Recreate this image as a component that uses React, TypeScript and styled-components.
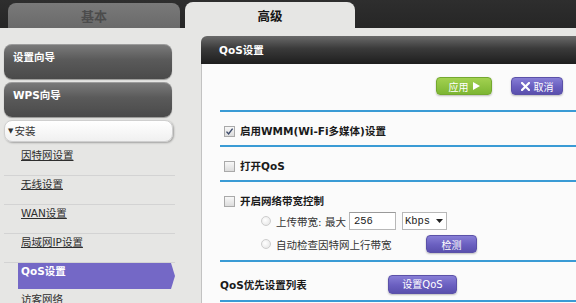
import React from "react";
import styled, { createGlobalStyle, css } from "styled-components";

const GlobalStyle = createGlobalStyle`
  html, body { margin: 0; padding: 0; background: #2a2a2a; }
  body {
    width: 576px; height: 303px; overflow: hidden;
    font-family: "DejaVu Sans", "Noto Sans CJK SC", sans-serif;
  }
`;

const Page = styled.div`
  width: 576px;
  height: 303px;
  overflow: hidden;
  display: flex;
  flex-direction: column;
  background: #2a2a2a;
  font-size: 10.5px;
  font-family: "DejaVu Sans", "Noto Sans CJK SC", sans-serif;
`;

const TabBar = styled.div`
  height: 28px;
  flex: none;
  display: flex;
  align-items: flex-end;
  gap: 5px;
  padding-left: 8px;
  box-sizing: border-box;
  background: linear-gradient(#2e2e2e, #262626);
`;

const Tab = styled.div<{ $active?: boolean }>`
  box-sizing: border-box;
  display: flex;
  align-items: center;
  justify-content: center;
  border-radius: 8px 8px 0 0;
  font-weight: bold;
  ${(p) =>
    p.$active
      ? css`
          width: 170px;
          height: 26px;
          background: #e6e6e4;
          color: #151515;
          font-size: 12.5px;
        `
      : css`
          width: 172px;
          height: 25px;
          background: linear-gradient(#797979, #6a6a6a);
          color: #4c4c4c;
          font-size: 13px;
        `}
`;

const Main = styled.div`
  flex: 1;
  display: flex;
  background: #e6e6e4;
  min-height: 0;
`;

const Sidebar = styled.div`
  width: 201px;
  flex: none;
  box-sizing: border-box;
  padding: 16px 0 0 4px;
  display: flex;
  flex-direction: column;
  & > * { flex: none; }
`;

const NavButton = styled.div`
  width: 168px;
  height: 35px;
  margin-bottom: 3px;
  box-sizing: border-box;
  padding: 5px 0 0 9px;
  line-height: 16px;
  border-radius: 8px;
  color: #fff;
  font-weight: bold;
  background: linear-gradient(#7c7c7c, #5a5a5a 45%, #4a4a4a);
  box-shadow: 0 1px 1px rgba(0, 0, 0, 0.35), inset 0 1px 0 rgba(255, 255, 255, 0.25);
`;

const SectionHeader = styled.div`
  width: 169px;
  height: 22px;
  box-sizing: border-box;
  border: 1px solid #cfcfcf;
  border-radius: 8px;
  background: linear-gradient(#ffffff, #f0f0f0);
  box-shadow: 1px 1px 2px rgba(0, 0, 0, 0.3);
  padding-left: 3px;
  line-height: 20px;
  color: #333;
  display: flex;
  align-items: center;
  gap: 1px;
`;

const Caret = styled.span`
  font-size: 7px;
  color: #333;
`;

const ItemList = styled.div`
  margin-top: 5px;
  width: 171px;
  display: flex;
  flex-direction: column;
  & > * { flex: none; }
`;

const Item = styled.div<{ $selected?: boolean }>`
  box-sizing: border-box;
  line-height: 16px;
  ${(p) =>
    p.$selected
      ? css`
          height: 26px;
          margin: 0 0 2px 14px;
          padding-left: 3px;
          background: #7468c6;
          color: #fff;
          font-weight: bold;
          clip-path: polygon(0 0, calc(100% - 4px) 0, 100% 50%, calc(100% - 4px) 100%, 0 100%);
        `
      : css`
          height: 29px;
          padding-left: 17px;
          color: #2e2e2e;
          text-decoration: underline;
          border-bottom: 1px solid #d3d3d3;
        `}
`;

const Panel = styled.div`
  flex: 1;
  min-width: 0;
  margin-top: 8px;
  display: flex;
  flex-direction: column;
  border-radius: 6px 0 0 0;
  overflow: hidden;
`;

const PanelHeader = styled.div`
  height: 28px;
  flex: none;
  box-sizing: border-box;
  padding-left: 18px;
  line-height: 29px;
  color: #fff;
  font-weight: bold;
  background: linear-gradient(#6a6a6a, #3a3a3a 45%, #1e1e1e);
`;

const PanelBody = styled.div`
  flex: 1;
  background: #fbfbfb;
  border-left: 1px solid #c2c2c2;
  padding-left: 18px;
  display: flex;
  flex-direction: column;
  & > * { flex: none; }
`;

const ButtonRow = styled.div`
  display: flex;
  justify-content: flex-end;
  gap: 19px;
  margin-top: 13px;
  padding-right: 13px;
  margin-bottom: 15px;
`;

const ActionButton = styled.div<{ $tone: "green" | "purple"; $w: number; $h?: number }>`
  width: ${(p) => p.$w}px;
  height: ${(p) => p.$h ?? 18}px;
  box-sizing: border-box;
  display: flex;
  align-items: center;
  justify-content: center;
  gap: 4px;
  border-radius: 4px;
  color: #fff;
  font-size: 10px;
  font-weight: normal;
  flex: none;
  ${(p) =>
    p.$tone === "green"
      ? css`
          background: linear-gradient(#a2d150, #7db633);
          border: 1px solid #74a82f;
        `
      : css`
          background: linear-gradient(#877ed6, #6a5fc0 55%, #5a50ad);
          border: 1px solid #5b51a8;
        `}
  box-shadow: 0 1px 2px rgba(0, 0, 0, 0.25);
`;

const Section = styled.div<{ $pt: number; $pb: number; $pl?: number }>`
  border-top: 2px solid #3a9bd5;
  padding: ${(p) => p.$pt}px 0 ${(p) => p.$pb}px ${(p) => p.$pl ?? 4}px;
  display: flex;
  flex-direction: column;
`;

const Line = styled.div`
  display: flex;
  align-items: center;
  gap: 5px;
  line-height: 16px;
  min-height: 16px;
  color: #1a1a1a;
  font-weight: bold;
`;

const SubLine = styled.div<{ $mt: number }>`
  display: flex;
  align-items: center;
  margin-top: ${(p) => p.$mt}px;
  padding-left: 37px;
  height: 18px;
  color: #333;
`;

const Box = styled.span`
  width: 11px;
  height: 11px;
  box-sizing: border-box;
  border: 1px solid #a9a9a9;
  background: linear-gradient(#f8f8f8, #dcdcdc);
  display: inline-flex;
  align-items: center;
  justify-content: center;
  flex: none;
`;

const Radio = styled.span`
  width: 10px;
  height: 10px;
  box-sizing: border-box;
  border-radius: 50%;
  border: 1px solid #cdcdcd;
  background: radial-gradient(circle at 40% 40%, #ffffff, #e2e2e2);
  margin-right: 5px;
  flex: none;
`;

const TextInput = styled.div`
  width: 47px;
  height: 18px;
  box-sizing: border-box;
  border: 1px solid #b8b8b8;
  border-top-color: #9a9a9a;
  background: #fff;
  margin-left: 3px;
  padding-left: 4px;
  font-family: "Liberation Mono", monospace;
  font-size: 10.5px;
  line-height: 16px;
  color: #222;
`;

const Select = styled.div`
  width: 45px;
  height: 18px;
  box-sizing: border-box;
  border: 1px solid #b8b8b8;
  background: #fff;
  margin-left: 6px;
  padding: 0 3px 0 2px;
  display: flex;
  align-items: center;
  justify-content: space-between;
  font-family: "Liberation Mono", monospace;
  font-size: 10.5px;
  color: #222;
`;

const Label = styled.span<{ $w?: number }>`
  ${(p) => (p.$w ? `width: ${p.$w}px; flex: none;` : "")}
`;

const Check = () => (
  <svg width="9" height="9" viewBox="0 0 9 9">
    <path d="M1.5 4.6 L3.6 7 L7.6 1.6" fill="none" stroke="#3c4a6a" strokeWidth="1.4" />
  </svg>
);

const Play = () => (
  <svg width="7" height="8" viewBox="0 0 7 8">
    <polygon points="0,0 7,4 0,8" fill="#fff" />
  </svg>
);

const Cross = () => (
  <svg width="9" height="9" viewBox="0 0 9 9">
    <path d="M1 1 L8 8 M8 1 L1 8" stroke="#fff" strokeWidth="2.2" strokeLinecap="square" />
  </svg>
);

const Arrow = () => (
  <svg width="7" height="4" viewBox="0 0 7 4">
    <polygon points="0,0 7,0 3.5,4" fill="#222" />
  </svg>
);

export default function App() {
  return (
    <Page>
      <GlobalStyle />
      <TabBar>
        <Tab>基本</Tab>
        <Tab $active>高级</Tab>
      </TabBar>
      <Main>
        <Sidebar>
          <NavButton>设置向导</NavButton>
          <NavButton>WPS向导</NavButton>
          <SectionHeader>
            <Caret>▼</Caret>安装
          </SectionHeader>
          <ItemList>
            <Item>因特网设置</Item>
            <Item>无线设置</Item>
            <Item>WAN设置</Item>
            <Item>局域网IP设置</Item>
            <Item $selected>QoS设置</Item>
            <Item>访客网络</Item>
          </ItemList>
        </Sidebar>
        <Panel>
          <PanelHeader>QoS设置</PanelHeader>
          <PanelBody>
            <ButtonRow>
              <ActionButton $tone="green" $w={56}>
                应用 <Play />
              </ActionButton>
              <ActionButton $tone="purple" $w={52}>
                <Cross />取消
              </ActionButton>
            </ButtonRow>
            <Section $pt={11} $pb={6}>
              <Line>
                <Box>
                  <Check />
                </Box>
                启用WMM(Wi-Fi多媒体)设置
              </Line>
            </Section>
            <Section $pt={11} $pb={6}>
              <Line>
                <Box />
                打开QoS
              </Line>
            </Section>
            <Section $pt={11} $pb={7}>
              <Line>
                <Box />
                开启网络带宽控制
              </Line>
              <SubLine $mt={3}>
                <Radio />
                上传带宽: 最大
                <TextInput>256</TextInput>
                <Select>
                  Kbps <Arrow />
                </Select>
              </SubLine>
              <SubLine $mt={5}>
                <Radio />
                <Label $w={150}>自动检查因特网上行带宽</Label>
                <ActionButton $tone="purple" $w={51}>
                  检测
                </ActionButton>
              </SubLine>
            </Section>
            <Section $pt={13} $pb={6} $pl={0}>
              <Line>
                <Label $w={163}>QoS优先设置列表</Label>
                <ActionButton $tone="purple" $w={69} $h={19}>
                  设置QoS
                </ActionButton>
              </Line>
            </Section>
            <Section $pt={0} $pb={0} />
          </PanelBody>
        </Panel>
      </Main>
    </Page>
  );
}
